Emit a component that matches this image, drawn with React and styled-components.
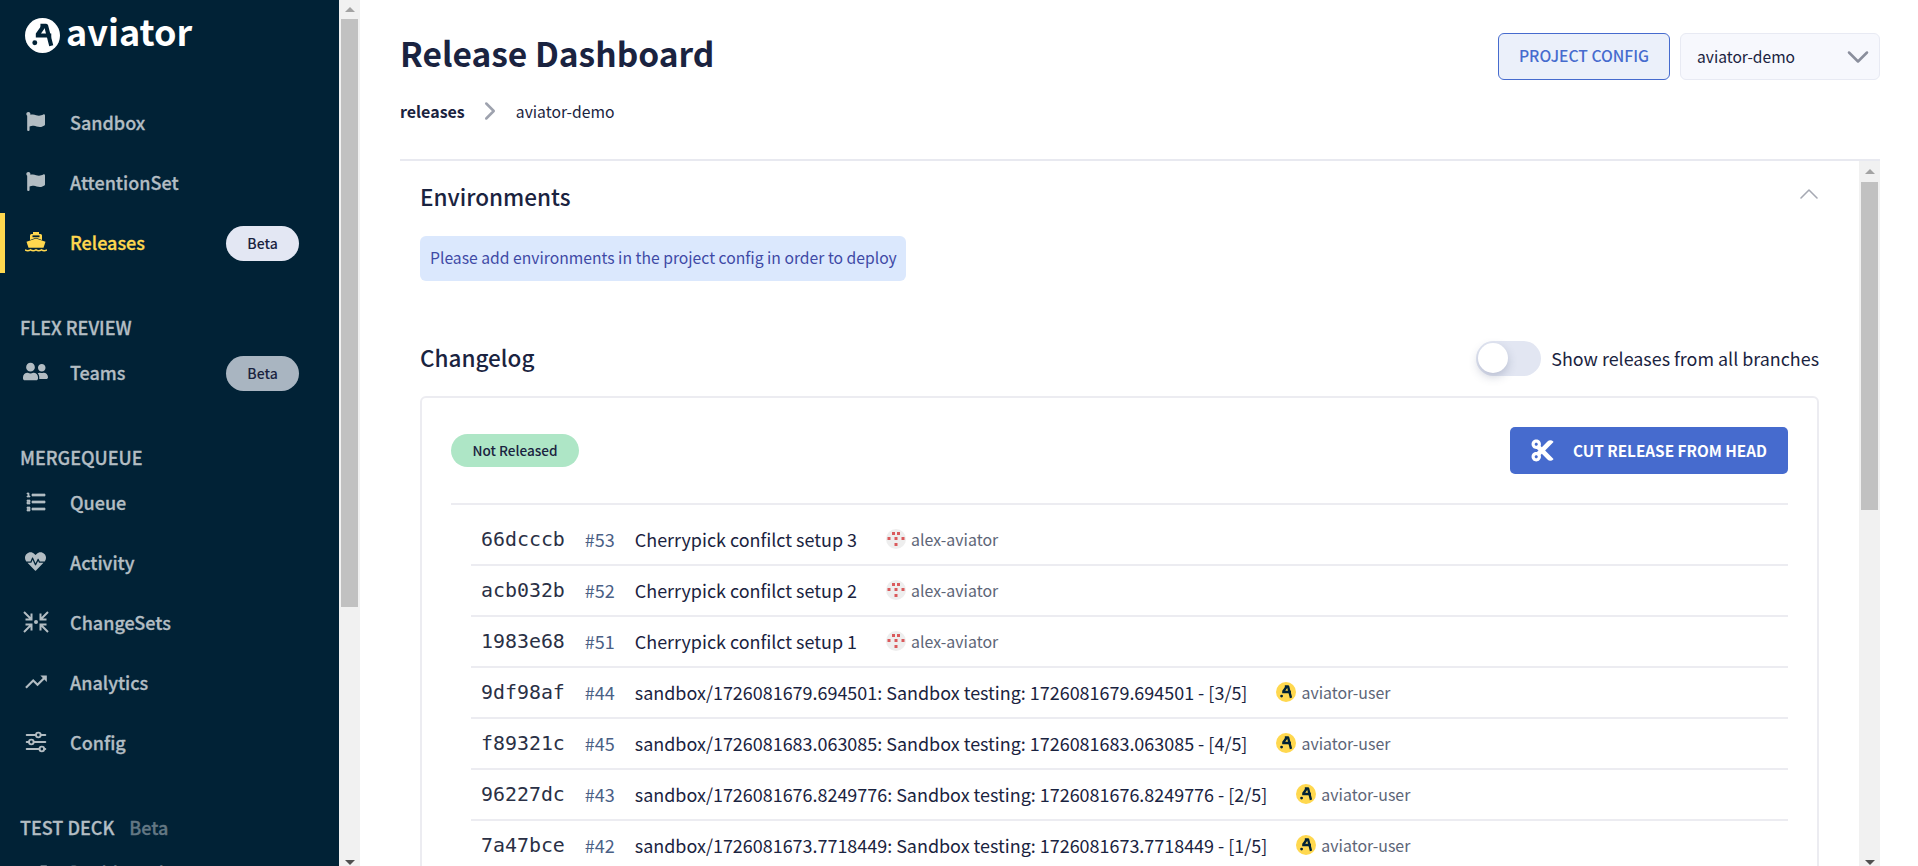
import React from "react";
import styled, { createGlobalStyle, css } from "styled-components";
import { FaFlag, FaUserFriends, FaHeartbeat, FaCut } from "react-icons/fa";
import { RiListOrdered } from "react-icons/ri";
import { MdTrendingUp } from "react-icons/md";
import { TbAdjustmentsHorizontal } from "react-icons/tb";
import { ChevronDown, ChevronUp, ChevronRight } from "lucide-react";

const FONT = `"Noto Sans CJK JP", "Noto Sans", sans-serif`;

const Global = createGlobalStyle`
  html, body { margin: 0; padding: 0; height: 100%; overflow: hidden; background: #fff; }
  body { font-family: ${FONT}; color: #1a2340; }
  #root { height: 100%; }
  * { box-sizing: border-box; }
`;

const Shell = styled.div`
  display: flex;
  height: 866px;
  overflow: hidden;
`;

const ScrollTrack = styled.div`
  flex: 0 0 21px;
  height: 100%;
  background: #f1f1f1;
  display: flex;
  flex-direction: column;
  align-items: center;
`;

const ScrollButton = styled.div`
  flex: 0 0 ${(p) => p.$h}px;
  display: flex;
  justify-content: center;
  align-items: ${(p) => (p.$down ? "flex-end" : "center")};
  padding-bottom: ${(p) => (p.$down ? 1 : 0)}px;
  &::after {
    content: "";
    width: 0;
    height: 0;
    border-left: 5px solid transparent;
    border-right: 5px solid transparent;
    ${(p) => (p.$down ? "border-top: 5px solid #505050;" : "border-bottom: 5px solid #a3a3a3;")}
  }
`;

const ScrollThumb = styled.div`
  flex: 0 0 ${(p) => p.$h}px;
  width: 17px;
  background: #c1c1c1;
`;

const ScrollGap = styled.div`
  flex: 1;
`;

const Scrollbar = ({ button, thumb }) => (
  <ScrollTrack>
    <ScrollButton $h={button} />
    <ScrollThumb $h={thumb} />
    <ScrollGap />
    <ScrollButton $h={button} $down />
  </ScrollTrack>
);

const Sidebar = styled.aside`
  flex: 0 0 360px;
  height: 100%;
  display: flex;
`;

const SidebarBody = styled.div`
  flex: 1;
  min-width: 0;
  overflow: hidden;
  background: #012236;
`;

const LogoBar = styled.div`
  height: 93px;
  padding: 18px 0 0 25px;
  display: flex;
  align-items: flex-start;
  gap: 6px;
`;

const LogoText = styled.span`
  font-size: 36px;
  line-height: 32px;
  font-weight: 700;
  color: #fff;
  margin-top: -4px;
`;

const SectionLabel = styled.div`
  height: 28px;
  margin: 40px 0 2px;
  padding: 0 0 1px 20px;
  display: flex;
  align-items: center;
  gap: 15px;
  font-size: 18px;
  font-weight: 500;
  color: #b3bdc3;
  -webkit-text-stroke: 0.3px #b3bdc3;
`;

const LabelBeta = styled.span`
  opacity: 0.55;
`;

const NavRow = styled.div`
  position: relative;
  height: 60px;
  padding-bottom: 3px;
  display: flex;
  align-items: center;
  font-size: 18px;
  font-weight: 500;
  color: ${(p) => (p.$active ? "#ffd84f" : "#b3bdc3")};
  -webkit-text-stroke: 0.3px currentColor;
  ${(p) => p.$active && css`
    &::before {
      content: "";
      position: absolute;
      left: 0;
      top: 0;
      bottom: 0;
      width: 5px;
      background: #ffd84f;
    }
  `}
`;

const IconSlot = styled.span`
  width: 35px;
  margin-left: 18px;
  margin-right: 17px;
  display: flex;
  justify-content: center;
  align-items: center;
  -webkit-text-stroke: 0;
`;

const NavText = styled.span`
  flex: 1;
`;

const BetaPill = styled.span`
  width: 73px;
  height: 35px;
  margin: 3px 40px 0 0;
  border-radius: 18px;
  display: flex;
  align-items: center;
  justify-content: center;
  font-size: 14px;
  font-weight: 500;
  color: #1a2340;
  -webkit-text-stroke: 0;
  background: ${(p) => (p.$dim ? "#a9b5c1" : "#e3e7f3")};
`;

const Main = styled.main`
  flex: 1;
  min-width: 0;
  height: 100%;
  padding: 0 38px 0 40px;
  display: flex;
  flex-direction: column;
`;

const Header = styled.header`
  flex: 0 0 161px;
  padding-top: 33px;
  display: flex;
  justify-content: space-between;
  align-items: flex-start;
  border-bottom: 2px solid #e8e9f0;
`;

const Title = styled.h1`
  margin: -2px 0 2px;
  font-size: 33.5px;
  line-height: 44px;
  font-weight: 700;
  color: #1a2340;
`;

const Crumbs = styled.div`
  margin-top: 24px;
  height: 24px;
  display: flex;
  align-items: center;
  font-size: 15.7px;
  color: #1a2340;
`;

const CrumbStrong = styled.strong`
  font-weight: 700;
  font-size: 16px;
`;

const CrumbSep = styled.span`
  display: flex;
  margin: 0 11px 0 10px;
  color: #9ea2ae;
`;

const Actions = styled.div`
  display: flex;
  gap: 10px;
`;

const ConfigButton = styled.button`
  width: 172px;
  height: 47px;
  padding: 0 0 2px;
  border: 1.5px solid #466bce;
  border-radius: 6px;
  background: #ebf0fa;
  color: #466bce;
  font-family: inherit;
  font-size: 15.7px;
  font-weight: 500;
`;

const SelectBox = styled.div`
  width: 200px;
  height: 47px;
  padding: 0 3px 2px 16px;
  border: 1px solid #e8eaf3;
  border-radius: 6px;
  background: #f7f8fd;
  display: flex;
  align-items: center;
  justify-content: space-between;
  font-size: 15.6px;
  color: #1a2340;
  & > svg { color: #8a8e9c; margin-top: 2px; }
`;

const Panel = styled.section`
  flex: 1;
  min-height: 0;
  display: flex;
`;

const PanelBody = styled.div`
  flex: 1;
  min-width: 0;
  overflow: hidden;
  padding: 20px 40px 0 20px;
`;

const SectionHead = styled.div`
  display: flex;
  align-items: center;
  justify-content: space-between;
  height: ${(p) => p.$h || 30}px;
  margin-top: ${(p) => p.$mt || 0}px;
`;

const SectionTitle = styled.h2`
  margin: 0;
  font-size: 22.5px;
  line-height: 30px;
  font-weight: 500;
  color: #1a2340;
`;

const ChangelogTitle = styled(SectionTitle)`
  margin-top: -2px;
`;

const CollapseIcon = styled.span`
  display: flex;
  margin: -4px -6px 0 0;
  color: #a6a9b3;
`;

const Alert = styled.div`
  width: 486px;
  height: 45px;
  margin-top: 25px;
  padding: 0 10px 2px;
  border-radius: 6px;
  background: #dbe8fd;
  display: flex;
  align-items: center;
  font-size: 15.7px;
  color: #3f4aa6;
  white-space: nowrap;
`;

const ToggleWrap = styled.label`
  display: flex;
  align-items: center;
  gap: 10px;
  font-size: 17.9px;
  color: #1a2340;
`;

const ToggleTrack = styled.span`
  position: relative;
  display: block;
  width: 65px;
  height: 35px;
  border-radius: 18px;
  background: #e2e6f2;
`;

const ToggleKnob = styled.span`
  position: absolute;
  left: 2px;
  top: 2px;
  width: 30px;
  height: 30px;
  border-radius: 50%;
  background: #fff;
  box-shadow: 0 4px 10px rgba(60, 70, 110, 0.25);
`;

const Card = styled.div`
  margin-top: 20px;
  padding: 30px 29px 0 29px;
  border: 2px solid #ececf1;
  border-radius: 6px;
  min-height: 700px;
`;

const CardHead = styled.div`
  height: 77px;
  padding-bottom: 30px;
  display: flex;
  align-items: center;
  justify-content: space-between;
  border-bottom: 2px solid #ececf1;
`;

const StatusPill = styled.span`
  width: 128px;
  height: 33px;
  border-radius: 17px;
  background: #aee6c6;
  display: flex;
  align-items: center;
  justify-content: center;
  padding-bottom: 1px;
  font-size: 13.6px;
  font-weight: 500;
  color: #1a2340;
`;

const CutButton = styled.button`
  width: 278px;
  height: 47px;
  border: 0;
  border-radius: 5px;
  background: #466bce;
  color: #fff;
  display: flex;
  align-items: center;
  gap: 18px;
  padding: 0 0 2px 20px;
  font-family: inherit;
  font-size: 15.3px;
  font-weight: 700;
  & > svg { margin-top: 2px; }
`;

const List = styled.ul`
  list-style: none;
  margin: 10px 0 0 20px;
  padding: 0;
`;

const Row = styled.li`
  height: 51px;
  padding: 0 0 2px 10px;
  display: flex;
  align-items: center;
  gap: 20px;
  border-bottom: 2px solid #ececf1;
`;

const Hash = styled.code`
  font-family: "DejaVu Sans Mono", monospace;
  font-size: 19.9px;
  margin-top: 1px;
  color: #2a3045;
`;

const Num = styled.span`
  font-size: 18px;
  color: #4a6085;
`;

const RowTitle = styled.span`
  font-size: 17.95px;
  color: #1a2340;
`;

const Author = styled.span`
  margin: 1px 0 0 9px;
  display: flex;
  align-items: center;
  gap: 5px;
  font-size: 15.9px;
  color: #5d6577;
`;

const MarkSvg = ({ size, bg, fg }) => (
  <svg width={size} height={size} viewBox="0 0 34 34" style={{ flex: "none" }}>
    <circle cx="17" cy="17" r="17" fill={bg} />
    <path d="M15 7.5h5.5L25.5 27" fill="none" stroke={fg} strokeWidth="4" strokeLinejoin="round" />
    <path d="M18 8 12 16.5M10.5 17h15" fill="none" stroke={fg} strokeWidth="4" />
    <circle cx="9.5" cy="24" r="2.4" fill={fg} />
  </svg>
);

const Identicon = () => (
  <svg width="20" height="20" viewBox="0 0 20 20" style={{ flex: "none" }}>
    <circle cx="10" cy="10" r="10" fill="#eeeeee" />
    <g fill="#da5a5c">
      <rect x="6" y="3" width="3" height="3" />
      <rect x="11" y="3" width="3" height="3" />
      <rect x="1.5" y="8" width="3" height="3" />
      <rect x="8.5" y="8" width="3" height="3" />
      <rect x="15.5" y="8" width="3" height="3" />
      <rect x="8.5" y="14" width="3" height="3" />
    </g>
  </svg>
);

const FerryIcon = () => (
  <svg width="22" height="20" viewBox="0 0 22 20">
    <path fill="currentColor" d="M5 8V3.5A1.5 1.5 0 0 1 6.5 2H8V0h6v2h1.5A1.5 1.5 0 0 1 17 3.5V8l-6-2.2z" />
    <path fill="#012236" d="M7.5 3.4h7v1.8h-7z" />
    <path fill="currentColor" d="M1.5 9.8 11 6.4l9.5 3.4-2 6H3.5z" />
    <path fill="none" stroke="currentColor" strokeWidth="1.6" d="M0 17.8c1.8 1.2 3.7 1.2 5.5 0 1.8 1.2 3.7 1.2 5.5 0 1.8 1.2 3.7 1.2 5.5 0 1.8 1.2 3.7 1.2 5.5 0" />
  </svg>
);

const ChangeSetsIcon = () => (
  <svg width="26" height="22" viewBox="0 0 26 22" fill="none" stroke="currentColor" strokeWidth="2">
    <path d="M1 1l7 7M2.5 8.5h6v-6" />
    <path d="M25 1l-7 7M23.5 8.5h-6v-6" />
    <path d="M1 21l7-7M2.5 13.5h6v6" />
    <path d="M25 21l-7-7M23.5 13.5h-6v6" />
    <circle cx="13" cy="11" r="2" fill="currentColor" stroke="none" />
  </svg>
);

const rows = [
  ["66dcccb", "#53", "Cherrypick confilct setup 3", "alex-aviator"],
  ["acb032b", "#52", "Cherrypick confilct setup 2", "alex-aviator"],
  ["1983e68", "#51", "Cherrypick confilct setup 1", "alex-aviator"],
  ["9df98af", "#44", "sandbox/1726081679.694501: Sandbox testing: 1726081679.694501 - [3/5]", "aviator-user"],
  ["f89321c", "#45", "sandbox/1726081683.063085: Sandbox testing: 1726081683.063085 - [4/5]", "aviator-user"],
  ["96227dc", "#43", "sandbox/1726081676.8249776: Sandbox testing: 1726081676.8249776 - [2/5]", "aviator-user"],
  ["7a47bce", "#42", "sandbox/1726081673.7718449: Sandbox testing: 1726081673.7718449 - [1/5]", "aviator-user"],
];

const Nav = ({ icon, children, active, beta, dim }) => (
  <NavRow $active={active}>
    <IconSlot>{icon}</IconSlot>
    <NavText>{children}</NavText>
    {beta && <BetaPill $dim={dim}>Beta</BetaPill>}
  </NavRow>
);

export default function App() {
  return (
    <Shell>
      <Global />
      <Sidebar>
        <SidebarBody>
          <LogoBar>
            <MarkSvg size={35} bg="#fff" fg="#012236" />
            <LogoText>aviator</LogoText>
          </LogoBar>
          <Nav icon={<FaFlag size={19} />}>Sandbox</Nav>
          <Nav icon={<FaFlag size={19} />}>AttentionSet</Nav>
          <Nav icon={<FerryIcon />} active beta>Releases</Nav>
          <SectionLabel>FLEX REVIEW</SectionLabel>
          <Nav icon={<FaUserFriends size={25} />} beta dim>Teams</Nav>
          <SectionLabel>MERGEQUEUE</SectionLabel>
          <Nav icon={<RiListOrdered size={24} stroke="currentColor" strokeWidth={0.7} />}>Queue</Nav>
          <Nav icon={<FaHeartbeat size={21} />}>Activity</Nav>
          <Nav icon={<ChangeSetsIcon />}>ChangeSets</Nav>
          <Nav icon={<MdTrendingUp size={26} />}>Analytics</Nav>
          <Nav icon={<TbAdjustmentsHorizontal size={28} strokeWidth={1.6} />}>Config</Nav>
          <SectionLabel>TEST DECK <LabelBeta>Beta</LabelBeta></SectionLabel>
          <Nav icon={<MdTrendingUp size={26} />}>Dashboard</Nav>
        </SidebarBody>
        <Scrollbar button={19} thumb={588} />
      </Sidebar>
      <Main>
        <Header>
          <div>
            <Title>Release Dashboard</Title>
            <Crumbs>
              <CrumbStrong>releases</CrumbStrong>
              <CrumbSep><ChevronRight size={30} strokeWidth={2} /></CrumbSep>
              <span>aviator-demo</span>
            </Crumbs>
          </div>
          <Actions>
            <ConfigButton>PROJECT CONFIG</ConfigButton>
            <SelectBox>aviator-demo<ChevronDown size={36} strokeWidth={1.7} /></SelectBox>
          </Actions>
        </Header>
        <Panel>
          <PanelBody>
            <SectionHead>
              <SectionTitle>Environments</SectionTitle>
              <CollapseIcon><ChevronUp size={32} strokeWidth={1.2} /></CollapseIcon>
            </SectionHead>
            <Alert>Please add environments in the project config in order to deploy</Alert>
            <SectionHead $mt={59} $h={36}>
              <ChangelogTitle>Changelog</ChangelogTitle>
              <ToggleWrap>
                <ToggleTrack><ToggleKnob /></ToggleTrack>
                Show releases from all branches
              </ToggleWrap>
            </SectionHead>
            <Card>
              <CardHead>
                <StatusPill>Not Released</StatusPill>
                <CutButton><FaCut size={25} />CUT RELEASE FROM HEAD</CutButton>
              </CardHead>
              <List>
                {rows.map(([hash, num, title, author]) => (
                  <Row key={hash}>
                    <Hash>{hash}</Hash>
                    <Num>{num}</Num>
                    <RowTitle>{title}</RowTitle>
                    <Author>
                      {author === "alex-aviator" ? <Identicon /> : <MarkSvg size={20} bg="#ffd84f" fg="#012236" />}
                      {author}
                    </Author>
                  </Row>
                ))}
              </List>
            </Card>
          </PanelBody>
          <Scrollbar button={21} thumb={328} />
        </Panel>
      </Main>
    </Shell>
  );
}
